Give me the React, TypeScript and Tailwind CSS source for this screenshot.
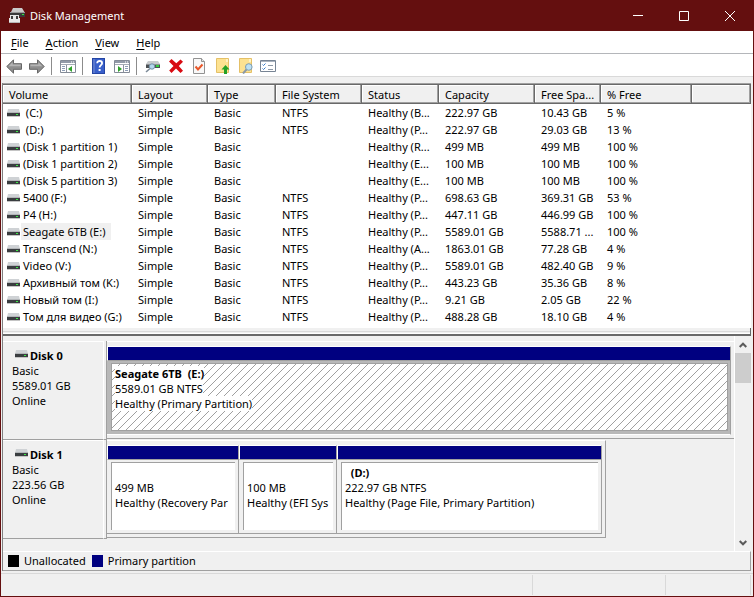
import type { ReactNode } from "react";

type Volume = {
  name: string;
  fs: string;
  status: string;
  capacity: string;
  free: string;
  percent: string;
  selected?: boolean;
};

type Partition = {
  title?: string;
  size: string;
  status: string;
  grow: string;
  selected?: boolean;
};

type Disk = {
  name: string;
  size: string;
  grow: string;
  rest?: string;
  partitions: Partition[];
};

const volumes: Volume[] = [
  { name: " (C:)", fs: "NTFS", status: "Healthy (B...", capacity: "222.97 GB", free: "10.43 GB", percent: "5 %" },
  { name: " (D:)", fs: "NTFS", status: "Healthy (P...", capacity: "222.97 GB", free: "29.03 GB", percent: "13 %" },
  { name: "(Disk 1 partition 1)", fs: "", status: "Healthy (R...", capacity: "499 MB", free: "499 MB", percent: "100 %" },
  { name: "(Disk 1 partition 2)", fs: "", status: "Healthy (E...", capacity: "100 MB", free: "100 MB", percent: "100 %" },
  { name: "(Disk 5 partition 3)", fs: "", status: "Healthy (E...", capacity: "100 MB", free: "100 MB", percent: "100 %" },
  { name: "5400 (F:)", fs: "NTFS", status: "Healthy (P...", capacity: "698.63 GB", free: "369.31 GB", percent: "53 %" },
  { name: "P4 (H:)", fs: "NTFS", status: "Healthy (P...", capacity: "447.11 GB", free: "446.99 GB", percent: "100 %" },
  { name: "Seagate 6TB (E:)", fs: "NTFS", status: "Healthy (P...", capacity: "5589.01 GB", free: "5588.71 ...", percent: "100 %", selected: true },
  { name: "Transcend (N:)", fs: "NTFS", status: "Healthy (A...", capacity: "1863.01 GB", free: "77.28 GB", percent: "4 %" },
  { name: "Video (V:)", fs: "NTFS", status: "Healthy (P...", capacity: "5589.01 GB", free: "482.40 GB", percent: "9 %" },
  { name: "Архивный том (K:)", fs: "NTFS", status: "Healthy (P...", capacity: "443.23 GB", free: "35.36 GB", percent: "8 %" },
  { name: "Новый том (I:)", fs: "NTFS", status: "Healthy (P...", capacity: "9.21 GB", free: "2.05 GB", percent: "22 %" },
  { name: "Том для видео (G:)", fs: "NTFS", status: "Healthy (P...", capacity: "488.28 GB", free: "18.10 GB", percent: "4 %" },
];

const columns = [
  { label: "Volume", width: "w-[129px]" },
  { label: "Layout", width: "w-[76px]" },
  { label: "Type", width: "w-[68px]" },
  { label: "File System", width: "w-[86px]" },
  { label: "Status", width: "w-[77px]" },
  { label: "Capacity", width: "w-[96px]" },
  { label: "Free Spa...", width: "w-[66px]" },
  { label: "% Free", width: "w-[91px]" },
  { label: "", width: "" },
];

const disks: Disk[] = [
  {
    name: "Disk 0",
    size: "5589.01 GB",
    grow: "grow",
    partitions: [
      { title: "Seagate 6TB  (E:)", size: "5589.01 GB NTFS", status: "Healthy (Primary Partition)", grow: "grow", selected: true },
    ],
  },
  {
    name: "Disk 1",
    size: "223.56 GB",
    grow: "grow-[495]",
    rest: "grow-[128]",
    partitions: [
      { size: "499 MB", status: "Healthy (Recovery Par", grow: "grow-[131]" },
      { size: "100 MB", status: "Healthy (EFI Sys", grow: "grow-[97]" },
      { title: "  (D:)", size: "222.97 GB NTFS", status: "Healthy (Page File, Primary Partition)", grow: "grow-[264]" },
    ],
  },
];

function Icon({ children }: { children: ReactNode }) {
  return (
    <svg width="16" height="16" viewBox="0 0 16 16" fill="none" aria-hidden="true" className="shrink-0">
      {children}
    </svg>
  );
}

function DriveIcon() {
  return (
    <svg width="13" height="8" viewBox="0 0 13 8" aria-hidden="true" className="mr-px shrink-0">
      <path d="M1 0h11l1 4H0z" fill="#cfd2d5" />
      <path d="M0 3h13v1H0z" fill="#b3b6b9" />
      <path d="M0 4h13v3H0z" fill="#3a3d40" />
      <path d="M0 7h13v1H0z" fill="#c4c4c4" />
      <path d="M9 5h2v1H9z" fill="#3bea45" />
    </svg>
  );
}

function AppIcon() {
  return (
    <Icon>
      <path d="M4 0h9l3 5H1.500z" fill="#c9c9c9" />
      <path d="M1 5h15v4H1z" fill="#3a3a3a" />
      <path d="M1 4h15v1H1z" fill="#9a9a9a" />
      <path d="M13 6h2v1h-2z" fill="#2ee53f" />
      <path d="M1 7h9v3h1v5H0v-5h1z" fill="#e8e8e8" />
      <path d="M2 8h2v3H2zM7 8h2v3H7z" fill="#3f3f3f" />
      <path d="M0 14h11v1H0z" fill="#b5b5b5" />
    </Icon>
  );
}

function ArrowIcon({ flip = false }: { flip?: boolean }) {
  return (
    <Icon>
      <g transform={flip ? "matrix(-1 0 0 1 16 0)" : undefined}>
        <path d="M.8 8.500 7.500 1.800v3.900h8v5.600h-8v3.900z" fill="#8e8e8e" stroke="#666" strokeLinejoin="round" />
        <path d="M2.500 8.200 6.600 4.200v2.400h8v1.600z" fill="#b4b4b4" />
      </g>
    </Icon>
  );
}

// Console window with a side tree, the arrow points at the pane that toggles
function PaneIcon({ tree }: { tree: "left" | "right" }) {
  return (
    <Icon>
      <path d="M.5 2.500h15v12H.5z" fill="#fff" stroke="#848b97" />
      <path d="M1 3h14v2H1z" fill="#929aa8" />
      <path d="M11 3.500h1v1h-1zM13 3.500h1v1h-1z" fill="#fff" />
      <path d="M1 6.500h14" stroke="#a4abb6" />
      {tree === "left" ? (
        <>
          <path d="M6.500 7v7" stroke="#8b929e" />
          <path d="M2 8.500h3M2 10.500h3M2 12.500h3" stroke="#8d9db6" />
          <path d="M12 8v6l-4-3z" fill="#2fa12b" />
        </>
      ) : (
        <>
          <path d="M9.500 7v7" stroke="#8b929e" />
          <path d="M11 8.500h3M11 10.500h3M11 12.500h3" stroke="#8d9db6" />
          <path d="M4 8v6l4-3z" fill="#2fa12b" />
        </>
      )}
    </Icon>
  );
}

function HelpIcon() {
  return (
    <Icon>
      <path d="M1 0h13v16H1z" fill="#2445a4" />
      <path d="M2 1h2v14H2z" fill="#5876cc" />
      <path d="M4 1h9v14H4z" fill="#385fca" />
      <path d="M6.200 5.300C6.200 3.700 7.300 3 8.600 3c1.500 0 2.500.8 2.500 2.200 0 2-2.500 2-2.500 4.400" stroke="#fff" strokeWidth="1.800" />
      <path d="M7.600 11h2v2h-2z" fill="#fff" />
    </Icon>
  );
}

function RescanIcon() {
  return (
    <Icon>
      <path d="M3 3h10l2 3H1z" fill="#c8cbce" />
      <path d="M1 6h14v4H1z" fill="#4b4f52" />
      <path d="M1 6h14v1H1z" fill="#8e9295" />
      <path d="M11 7h3v2h-3z" fill="#31d13c" />
      <path d="M5 10.500 1 14" stroke="#7c8a98" strokeWidth="1.600" />
      <circle cx="7" cy="8.500" r="2.700" fill="#b4d8ee" stroke="#7291a8" />
    </Icon>
  );
}

function DeleteIcon() {
  return (
    <Icon>
      <path d="M1 3.500 3.500 1 8.300 5.300 12.500 1.500 15 3.800 10.800 8 15 12.800 12.500 15 8 10.600 3.500 15 1.200 12.600 5.500 8z" fill="#d80b12" />
    </Icon>
  );
}

function CheckPageIcon() {
  return (
    <Icon>
      <path d="M2.500.5h8l3 3v12h-11z" fill="#f8f8f8" stroke="#929292" />
      <path d="M10.500.5v3h3" fill="#e3e3e3" stroke="#929292" />
      <path d="m4.500 8.500 2.500 3 4.500-5" stroke="#e8572a" strokeWidth="2" />
    </Icon>
  );
}

function NoteUpIcon() {
  return (
    <Icon>
      <path d="M2.500.5h12v14h-12z" fill="#fde291" stroke="#e4c067" />
      <path d="M12 1h2v3h-2z" fill="#fff2c4" />
      <path d="m11.500 7 4 4.500H13V16h-3v-4.500H7.500z" fill="#23a127" />
    </Icon>
  );
}

function NoteSearchIcon() {
  return (
    <Icon>
      <path d="M2.500.5h12v14h-12z" fill="#fde291" stroke="#e4c067" />
      <path d="M12 1h2v3h-2z" fill="#fff2c4" />
      <path d="m9.500 11.500-3.500 4" stroke="#8b99a5" strokeWidth="2" />
      <circle cx="11.800" cy="9" r="3.300" fill="#bde1f3" stroke="#7c9cb2" />
    </Icon>
  );
}

function TaskListIcon() {
  return (
    <Icon>
      <path d="M.5 2.500h15v11H.5z" fill="#fff" stroke="#778494" />
      <path d="M1 3h14v1H1z" fill="#aab3bf" />
      <path d="m2.500 6.500 1 1 2-2M2.500 10.500l1 1 2-2" stroke="#3379c8" />
      <path d="M8 7.500h5M8 11.500h5" stroke="#8e99a6" />
    </Icon>
  );
}

function ToolButton({ label, children }: { label: string; children: ReactNode }) {
  return (
    <button type="button" aria-label={label} className="flex h-full w-[23px] items-center pl-1">
      {children}
    </button>
  );
}

function ToolDivider() {
  return <span className="mr-1 ml-[3px] h-[18px] w-px bg-[#8c8c8c]" />;
}

function TitleBar() {
  return (
    <header className="flex h-[31px] items-center bg-[#640f0f] pl-2 text-white">
      <AppIcon />
      <h1 className="grow pl-[5px]">Disk Management</h1>
      <button type="button" aria-label="Minimize" className="flex h-full w-[46px] items-center justify-center">
        <svg width="10" height="10" viewBox="0 0 10 10" aria-hidden="true">
          <path d="M0 4.500h10" stroke="#fff" />
        </svg>
      </button>
      <button type="button" aria-label="Maximize" className="flex h-full w-[46px] items-center justify-center">
        <svg width="10" height="10" viewBox="0 0 10 10" fill="none" aria-hidden="true">
          <path d="M.5.5h9v9h-9z" stroke="#fff" />
        </svg>
      </button>
      <button type="button" aria-label="Close" className="flex h-full w-[46px] items-center justify-center">
        <svg width="10" height="10" viewBox="0 0 10 10" aria-hidden="true">
          <path d="m0 0 10 10M10 0 0 10" stroke="#fff" />
        </svg>
      </button>
    </header>
  );
}

function MenuBar() {
  return (
    <nav className="flex h-[23px] items-center gap-px border-b border-[#b4b6ba] bg-white pl-[2px]">
      {["File", "Action", "View", "Help"].map((item) => (
        <button key={item} type="button" className="px-2">
          <span className="underline underline-offset-2">{item[0]}</span>
          {item.slice(1)}
        </button>
      ))}
    </nav>
  );
}

function ToolBar() {
  return (
    <div className="flex h-[23px] items-center border-b border-[#d9d9d9] bg-white pt-[2px] pl-px">
      <ToolButton label="Back"><ArrowIcon /></ToolButton>
      <ToolButton label="Forward"><ArrowIcon flip /></ToolButton>
      <ToolDivider />
      <ToolButton label="Show or hide console tree"><PaneIcon tree="left" /></ToolButton>
      <ToolDivider />
      <ToolButton label="Help topics"><HelpIcon /></ToolButton>
      <ToolButton label="Show or hide action pane"><PaneIcon tree="right" /></ToolButton>
      <ToolDivider />
      <ToolButton label="Rescan disks"><RescanIcon /></ToolButton>
      <ToolButton label="Delete volume"><DeleteIcon /></ToolButton>
      <ToolButton label="Properties"><CheckPageIcon /></ToolButton>
      <ToolButton label="Open"><NoteUpIcon /></ToolButton>
      <ToolButton label="Explore"><NoteSearchIcon /></ToolButton>
      <ToolButton label="Settings"><TaskListIcon /></ToolButton>
    </div>
  );
}

function VolumeTable() {
  return (
    <div className="border-t border-[#a0a0a0] bg-white pb-[3px]">
      <table className="w-full table-fixed border-separate border-spacing-0 border-t border-[#696969] text-left">
        <thead>
          <tr>
            {columns.map((col) => (
              <th key={col.label} scope="col" className={`${col.width} h-[19px] bg-[#a0a0a0] p-0 font-normal`}>
                <div className="border-r border-b border-[#696969] pr-px pb-px">
                  <div className="h-[17px] border-t border-l border-white bg-[#f0f0f0] pl-[5px] leading-[17px] whitespace-nowrap">
                    {col.label}
                  </div>
                </div>
              </th>
            ))}
          </tr>
        </thead>
        <tbody>
          {volumes.map((v) => (
            <tr key={v.name} className="h-[17px] whitespace-nowrap">
              <td className="p-0 pl-1">
                <div className="flex items-center">
                  <DriveIcon />
                  <span className={`pr-[6px] pl-[2px] leading-[17px] whitespace-pre ${v.selected ? "bg-[#f0f0f0]" : ""}`}>
                    {v.name}
                  </span>
                </div>
              </td>
              <td className="p-0 pl-[6px]">Simple</td>
              <td className="p-0 pl-[6px]">Basic</td>
              <td className="p-0 pl-[6px]">{v.fs}</td>
              <td className="p-0 pl-[6px]">{v.status}</td>
              <td className="p-0 pl-[6px]">{v.capacity}</td>
              <td className="p-0 pl-[6px]">{v.free}</td>
              <td className="p-0 pl-[6px]">{v.percent}</td>
              <td className="p-0" />
            </tr>
          ))}
        </tbody>
      </table>
    </div>
  );
}

function Hatch() {
  return (
    <svg className="absolute inset-0 h-full w-full" shapeRendering="crispEdges" aria-hidden="true">
      <defs>
        <pattern id="hatch" width="8" height="8" patternUnits="userSpaceOnUse">
          <path
            d="M7 0h1v1H7zM6 1h1v1H6zM5 2h1v1H5zM4 3h1v1H4zM3 4h1v1H3zM2 5h1v1H2zM1 6h1v1H1zM0 7h1v1H0z"
            fill="#a0a0a0"
          />
        </pattern>
      </defs>
      <rect width="100%" height="100%" fill="url(#hatch)" />
    </svg>
  );
}

function PartitionBlock({ part }: { part: Partition }) {
  return (
    <div
      className={`${part.grow} flex min-w-0 basis-0 flex-col border-t border-r border-b border-t-white border-r-[#a0a0a0] ${
        part.selected ? "border-b-white" : "border-b-[#a0a0a0]"
      }`}
    >
      <div className="h-[14px] border-b border-l border-b-[#a0a0a0] border-l-white bg-[#000080]" />
      <div className={`pt-[2px] pb-[3px] pl-1 ${part.selected ? "bg-[#b8b8b8] pr-[2px]" : "pr-[3px]"}`}>
        <div
          className={`relative h-[68px] overflow-hidden border-t border-l border-[#a0a0a0] bg-white pt-[2px] pl-[3px] leading-[15px] whitespace-pre ${
            part.selected ? "border-r border-b" : ""
          }`}
        >
          {part.selected && <Hatch />}
          <div className="relative">
            <p className="h-[15px] font-bold"><span className="bg-white">{part.title}</span></p>
            <p><span className="bg-white">{part.size}</span></p>
            <p><span className="bg-white">{part.status}</span></p>
          </div>
        </div>
      </div>
    </div>
  );
}

function DiskRow({ disk }: { disk: Disk }) {
  return (
    <section className="flex h-[99px]">
      <div className="w-[101px] shrink-0 border-t border-r border-b border-t-white border-r-white border-b-[#a0a0a0] pt-[6px] pl-[9px] leading-[15px]">
        <h2 className="flex items-start gap-px pl-[3px] font-bold">
          <span className="pt-[2px]"><DriveIcon /></span>
          {disk.name}
        </h2>
        <p>Basic</p>
        <p>{disk.size}</p>
        <p>Online</p>
      </div>
      <div className="w-[3px] shrink-0 border-r border-b border-[#a0a0a0]" />
      <div
        className={`${disk.grow} mb-px flex min-w-0 basis-0 border-t border-b border-t-white border-b-[#a0a0a0] pt-1 pr-[3px] pb-[3px] ${
          disk.rest ? "border-r border-r-[#a0a0a0]" : ""
        }`}
      >
        {disk.partitions.map((part) => (
          <PartitionBlock key={part.status} part={part} />
        ))}
      </div>
      {disk.rest && <div className={`${disk.rest} basis-0`} />}
    </section>
  );
}

function ScrollBar() {
  return (
    <div className="flex w-[17px] shrink-0 flex-col border-l border-white">
      <button type="button" aria-label="Scroll up" className="flex h-[17px] items-center justify-center">
        <svg width="8" height="6" viewBox="0 0 8 6" fill="none" aria-hidden="true">
          <path d="m.7 5 3.300-3.300L7.300 5" stroke="#5a5a5a" strokeWidth="2" />
        </svg>
      </button>
      <div className="h-[30px] bg-[#cdcdcd]" />
      <div className="grow" />
      <button type="button" aria-label="Scroll down" className="flex h-[17px] items-center justify-center">
        <svg width="8" height="6" viewBox="0 0 8 6" fill="none" aria-hidden="true">
          <path d="m.7 1 3.300 3.300L7.300 1" stroke="#5a5a5a" strokeWidth="2" />
        </svg>
      </button>
    </div>
  );
}

function Legend() {
  return (
    <div className="flex h-5 items-center border-t border-r border-b border-t-white border-r-[#a0a0a0] border-b-[#a0a0a0] pb-px pl-[5px]">
      <span className="h-3 w-[11px] bg-black" />
      <span className="pr-[6px] pl-[5px]">Unallocated</span>
      <span className="h-3 w-[11px] bg-[#000080]" />
      <span className="pl-[5px]">Primary partition</span>
    </div>
  );
}

export default function App() {
  return (
    <div className="flex min-h-screen w-full flex-col border-r border-b border-l border-[#640f0f] bg-[#f0f0f0] font-['Noto_Sans','Open_Sans',sans-serif] text-[11px] leading-[15px] text-black">
      <TitleBar />
      <MenuBar />
      <ToolBar />
      <main className="mt-[6px] mr-[2px] ml-px flex grow flex-col border-l border-[#808080]">
        <VolumeTable />
        <div className="h-2 border-r border-b-2 border-[#696969] pt-[3px]">
          <div className="h-[3px] border-t border-b border-t-[#d9d9d9] border-b-white" />
        </div>
        <div className="flex grow">
          <div className="min-w-0 grow pt-[5px]">
            {disks.map((disk) => (
              <DiskRow key={disk.name} disk={disk} />
            ))}
          </div>
          <ScrollBar />
        </div>
        <Legend />
      </main>
      <footer className="mt-[2px] flex h-[23px] border-t border-[#d9d9d9] py-px pr-[2px]">
        <div className="grow border-r border-[#d9d9d9]" />
        <div className="w-[133px] border-r border-[#d9d9d9]" />
        <div className="w-[85px] border-r border-[#d9d9d9]" />
      </footer>
    </div>
  );
}
